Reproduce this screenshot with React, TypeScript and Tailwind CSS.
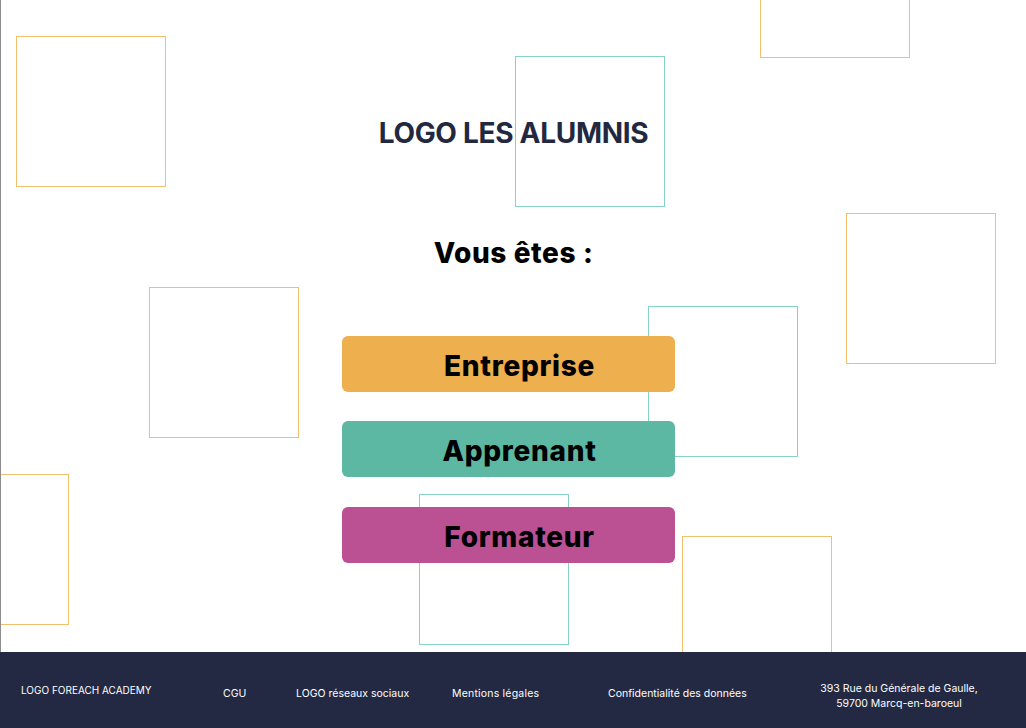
import React from 'react';

const squares = [
  { cls: 'left-[15px] top-[36px] border-[#f2bf6c]' },
  { cls: 'left-[514px] top-[56px] border-[#86d3c3]' },
  { cls: 'left-[759px] top-[-93px] border-[#f2bf6c]' },
  { cls: 'left-[845px] top-[213px] border-[#f2bf6c]' },
  { cls: 'left-[148px] top-[287px] border-[#f2bf6c]' },
  { cls: 'left-[647px] top-[306px] border-[#86d3c3]' },
  { cls: 'left-[-82px] top-[474px] border-[#f2bf6c]' },
  { cls: 'left-[418px] top-[494px] border-[#86d3c3]' },
  { cls: 'left-[681px] top-[536px] border-[#f2bf6c]' },
];

const roles = [
  { label: 'Entreprise', cls: 'bg-[#eeaf4e]' },
  { label: 'Apprenant', cls: 'bg-[#5cb8a2] mt-[29px]' },
  { label: 'Formateur', cls: 'bg-[#bb5193] mt-[30px]' },
];

export default function App() {
  return (
    <div className="w-[1026px] min-h-screen bg-white" style={{ fontFamily: 'Inter, "Noto Sans", sans-serif' }}>
      {/* Main */}
      <main className="relative h-[652px] overflow-hidden border-l border-[#8c8c8c]">
        {/* Decorative squares */}
        {squares.map((s, i) => (
          <div key={i} className={`absolute w-[150px] h-[151px] border pointer-events-none ${s.cls}`} />
        ))}

        <div className="relative flex flex-col items-center pt-[119px]">
          <h1 className="text-[28px] leading-[28px] font-bold text-[#22283f] tracking-[-0.3px]">
            LOGO LES ALUMNIS
          </h1>
          <h2 className="mt-[92px] text-[28px] leading-[28px] font-extrabold text-black tracking-[0.6px]">
            Vous êtes :
          </h2>

          <div className="mt-[69px] mr-[10px] flex flex-col">
            {roles.map((r) => (
              <button
                key={r.label}
                className={`w-[333px] h-[56px] rounded-[6px] flex items-center justify-center pl-[22px] pt-[4px] text-[28px] font-extrabold tracking-[0.7px] text-black ${r.cls}`}
              >
                {r.label}
              </button>
            ))}
          </div>
        </div>
      </main>

      {/* Footer */}
      <footer className="h-[76px] bg-[#232942] text-white text-[10.5px] flex items-center pl-[21px] pt-[8px] whitespace-nowrap">
        <span className="w-[202px] mb-[7px] text-[10px]">LOGO FOREACH ACADEMY</span>
        <span className="w-[73px]">CGU</span>
        <span className="w-[156px]">LOGO réseaux sociaux</span>
        <span className="w-[156px] tracking-[0.2px]">Mentions légales</span>
        <span className="w-[206px]">Confidentialité des données</span>
        <span className="w-[170px] text-center leading-[15px] mt-[3px]">
          393 Rue du Générale de Gaulle,
          <br />
          59700 Marcq-en-baroeul
        </span>
      </footer>
    </div>
  );
}
